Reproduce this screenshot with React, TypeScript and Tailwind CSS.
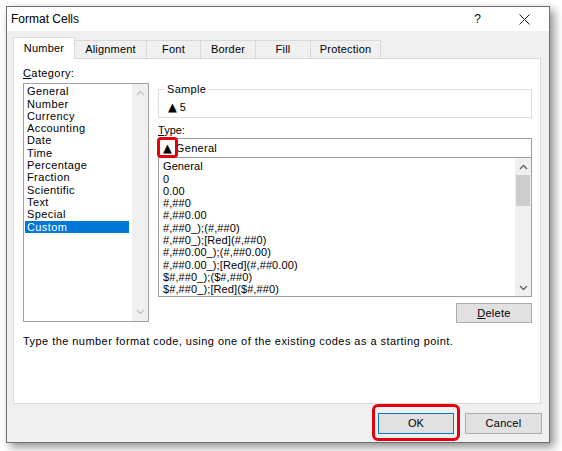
import React from "react";

const categories = [
  "General", "Number", "Currency", "Accounting", "Date", "Time",
  "Percentage", "Fraction", "Scientific", "Text", "Special", "Custom",
];

const types = [
  "General", "0", "0.00", "#,##0", "#,##0.00",
  "#,##0_);(#,##0)", "#,##0_);[Red](#,##0)", "#,##0.00_);(#,##0.00)",
  "#,##0.00_);[Red](#,##0.00)", "$#,##0_);($#,##0)", "$#,##0_);[Red]($#,##0)",
];

const tabs = [
  { label: "Number", w: "w-[62px]" },
  { label: "Alignment", w: "w-[73px]" },
  { label: "Font", w: "w-[55px]" },
  { label: "Border", w: "w-[56px]" },
  { label: "Fill", w: "w-[56px]" },
  { label: "Protection", w: "w-[71px]" },
];

function Chevron({ up, color }: { up?: boolean; color: string }) {
  return (
    <svg width="9" height="6" viewBox="0 0 9 6">
      <polyline
        points={up ? "1,5 4.5,1.5 8,5" : "1,1 4.5,4.5 8,1"}
        fill="none"
        stroke={color}
        strokeWidth="1.3"
      />
    </svg>
  );
}

export default function App() {
  return (
    <div className="w-[562px] h-[451px] bg-white pt-[6px] pl-[6px] overflow-hidden text-[11px] text-black [font-family:'Liberation_Sans',Arial,sans-serif]">
      <div className="w-[544px] h-[437px] border border-[#6f6f6f] bg-[#f0f0f0] flex flex-col shadow-[4px_4px_9px_rgba(0,0,0,0.45)]">
        {/* TITLE BAR */}
        <div className="h-[24px] bg-white flex items-center pl-[4px] shrink-0">
          <span className="text-[12px]">Format Cells</span>
          <span className="ml-auto mr-[38px] text-[12px]">?</span>
          <svg width="11" height="11" viewBox="0 0 11 11" className="mr-[19px]">
            <path d="M0.5 0.5 L10.5 10.5 M10.5 0.5 L0.5 10.5" stroke="#222" strokeWidth="1" />
          </svg>
        </div>

        {/* TABS */}
        <div className="pl-[6px] mt-[6px] flex items-end h-[21px] tracking-[0.2px]">
          {tabs.map((t, i) =>
            i === 0 ? (
              <div
                key={t.label}
                className={`${t.w} h-[22px] -mb-px relative z-10 bg-white border border-[#d9d9d9] border-b-0 flex items-center justify-center`}
              >
                {t.label}
              </div>
            ) : (
              <div
                key={t.label}
                className={`${t.w} h-[18px] -ml-px bg-[#f0f0f0] border border-[#d9d9d9] border-b-0 flex items-center justify-center`}
              >
                {t.label}
              </div>
            )
          )}
        </div>

        {/* PANEL */}
        <div className="ml-[6px] w-[528px] h-[346px] bg-white border border-[#d9d9d9] pl-[9px] leading-[12.3px]">
          <div className="flex items-start">
            {/* CATEGORY */}
            <div className="w-[126px] mt-[8px] tracking-[0.4px]">
              <div>
                <span className="underline">C</span>ategory:
              </div>
              <div className="mt-[4px] h-[239px] border border-[#a0a0a0] flex">
                <div className="flex-1 pt-[1px]">
                  {categories.map((c) => (
                    <div
                      key={c}
                      className={`ml-[1px] mr-[3px] pl-[2px] h-[12.3px] ${c === "Custom" ? "bg-[#0078d7] text-white" : ""}`}
                    >
                      {c}
                    </div>
                  ))}
                </div>
                <div className="w-[16px] bg-[#f0f0f0] flex flex-col items-center justify-between py-[6px]">
                  <Chevron up color="#c2c2c2" />
                  <Chevron color="#c2c2c2" />
                </div>
              </div>
            </div>

            {/* RIGHT COLUMN */}
            <div className="ml-[9px] w-[374px] mt-[24px]">
              <fieldset className="border border-[#dcdcdc] h-[35px] pl-[6px]">
                <legend className="px-[2px] tracking-[0.3px]">Sample</legend>
                <div className="mt-[5px] pl-[3px] flex items-center gap-[3px] h-[13px]">
                  <span className="[font-family:'DejaVu_Sans',sans-serif] text-[11.5px] leading-[12px]">▲</span>
                  <span>5</span>
                </div>
              </fieldset>

              <div className="mt-[6px]">
                <span className="underline">T</span>ype:
              </div>
              <div className="mt-[2px] h-[20px] border border-[#a0a0a0] flex items-center pl-[4px] gap-[4px] relative">
                <span className="[font-family:'DejaVu_Sans',sans-serif] text-[11.5px] leading-[12px]">▲</span>
                <span className="tracking-[0.3px]">General</span>
                <span className="absolute left-[-2px] top-[-2px] w-[21px] h-[21px] border-[3px] border-[#e3000f] rounded-[4px]" />
              </div>
              <div className="-mt-px h-[140px] border border-[#a0a0a0] flex">
                <div className="flex-1 pt-[2px] pl-[4px] tracking-[0.1px]">
                  {types.map((t) => (
                    <div key={t} className="h-[12.3px] whitespace-nowrap">
                      {t}
                    </div>
                  ))}
                </div>
                <div className="w-[16px] bg-[#f0f0f0] flex flex-col">
                  <div className="h-[17px] flex items-center justify-center">
                    <Chevron up color="#606060" />
                  </div>
                  <div className="h-[31px] mx-[1px] bg-[#cdcdcd]" />
                  <div className="flex-1" />
                  <div className="h-[17px] flex items-center justify-center">
                    <Chevron color="#606060" />
                  </div>
                </div>
              </div>
              <div className="flex justify-end mt-[6px]">
                <button className="w-[76px] h-[20px] bg-[#e1e1e1] border border-[#adadad] flex items-center justify-center tracking-[0.3px]">
                  <span>
                    <span className="underline">D</span>elete
                  </span>
                </button>
              </div>
            </div>
          </div>
          <div className="mt-[12px] tracking-[0.45px]">
            Type the number format code, using one of the existing codes as a starting point.
          </div>
        </div>

        {/* FOOTER BUTTONS */}
        <div className="flex justify-end gap-[11px] pr-[7px] mt-[9px]">
          <div className="relative">
            <button className="w-[76px] h-[21px] bg-[#e1e1e1] border border-[#0078d7] flex items-center justify-center">
              OK
            </button>
            <span className="absolute left-[-6px] right-[-6px] top-[-9px] bottom-[-7px] border-[3px] border-[#e3000f] rounded-[6px]" />
          </div>
          <button className="w-[77px] h-[21px] bg-[#e1e1e1] border border-[#adadad] flex items-center justify-center tracking-[0.3px]">
            Cancel
          </button>
        </div>
      </div>
    </div>
  );
}
